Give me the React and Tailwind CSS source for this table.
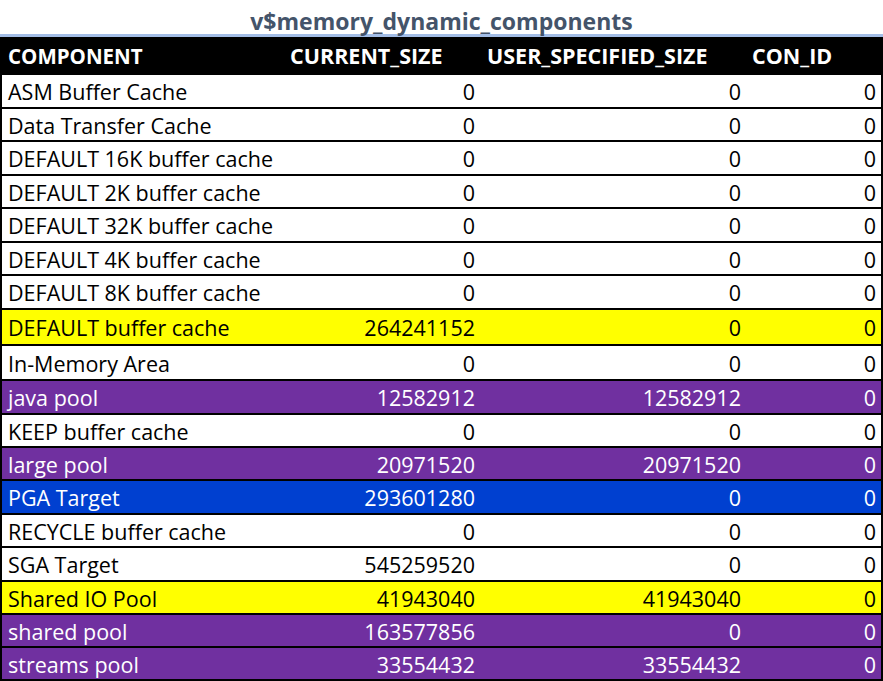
import React from 'react';

const rows = [
  { name: "ASM Buffer Cache", cur: "0", user: "0", con: "0", h: "h-[34px]", tone: "plain" },
  { name: "Data Transfer Cache", cur: "0", user: "0", con: "0", h: "h-[33px]", tone: "plain" },
  { name: "DEFAULT 16K buffer cache", cur: "0", user: "0", con: "0", h: "h-[34px]", tone: "plain" },
  { name: "DEFAULT 2K buffer cache", cur: "0", user: "0", con: "0", h: "h-[33px]", tone: "plain" },
  { name: "DEFAULT 32K buffer cache", cur: "0", user: "0", con: "0", h: "h-[34px]", tone: "plain" },
  { name: "DEFAULT 4K buffer cache", cur: "0", user: "0", con: "0", h: "h-[33px]", tone: "plain" },
  { name: "DEFAULT 8K buffer cache", cur: "0", user: "0", con: "0", h: "h-[34px]", tone: "plain" },
  { name: "DEFAULT buffer cache", cur: "264241152", user: "0", con: "0", h: "h-[36px]", tone: "yellow" },
  { name: "In-Memory Area", cur: "0", user: "0", con: "0", h: "h-[35px]", tone: "plain" },
  { name: "java pool", cur: "12582912", user: "12582912", con: "0", h: "h-[34px]", tone: "purple" },
  { name: "KEEP buffer cache", cur: "0", user: "0", con: "0", h: "h-[33px]", tone: "plain" },
  { name: "large pool", cur: "20971520", user: "20971520", con: "0", h: "h-[33px]", tone: "purple" },
  { name: "PGA Target", cur: "293601280", user: "0", con: "0", h: "h-[34px]", tone: "blue" },
  { name: "RECYCLE buffer cache", cur: "0", user: "0", con: "0", h: "h-[33px]", tone: "plain" },
  { name: "SGA Target", cur: "545259520", user: "0", con: "0", h: "h-[34px]", tone: "plain" },
  { name: "Shared IO Pool", cur: "41943040", user: "41943040", con: "0", h: "h-[33px]", tone: "yellow" },
  { name: "shared pool", cur: "163577856", user: "0", con: "0", h: "h-[33px]", tone: "purple" },
  { name: "streams pool", cur: "33554432", user: "33554432", con: "0", h: "h-[33px]", tone: "purple" },
];

const tones = {
  plain: "bg-white text-black",
  yellow: "bg-[#ffff00] text-black",
  purple: "bg-[#7030a0] text-white",
  blue: "bg-[#0040d0] text-white",
};

const cols = "grid grid-cols-[281px_197px_266px_135px]";

export default function App() {
  return (
    <div className="w-[883px] h-[681px] bg-white overflow-hidden" style={{ fontFamily: '"Open Sans", "Liberation Sans", sans-serif' }}>
      <div className="h-[34px] pt-[8px] flex items-center justify-center text-[23px] font-bold text-[#44546a] leading-none">
        v$memory_dynamic_components
      </div>
      <div className="h-[3px] bg-[#a3bde6]" />
      <div className="border-x-2 border-b-2 border-black text-[21.5px] leading-none">
        <div className={`${cols} h-[36px] pt-[2px] bg-black text-white font-bold items-center`}>
          <div className="pl-[6px] text-[20.5px]">COMPONENT</div>
          <div className="pl-[7px]">CURRENT_SIZE</div>
          <div className="pl-[7px]">USER_SPECIFIED_SIZE</div>
          <div className="pl-[6px]">CON_ID</div>
        </div>
        {rows.map((r) => (
          <div key={r.name} className={`${cols} ${r.h} ${tones[r.tone]} pt-[2px] border-t-2 border-black items-center`}>
            <div className="pl-[6px] whitespace-nowrap">{r.name}</div>
            <div className="pr-[5px] text-right">{r.cur}</div>
            <div className="pr-[5px] text-right">{r.user}</div>
            <div className="pr-[5px] text-right">{r.con}</div>
          </div>
        ))}
      </div>
    </div>
  );
}
